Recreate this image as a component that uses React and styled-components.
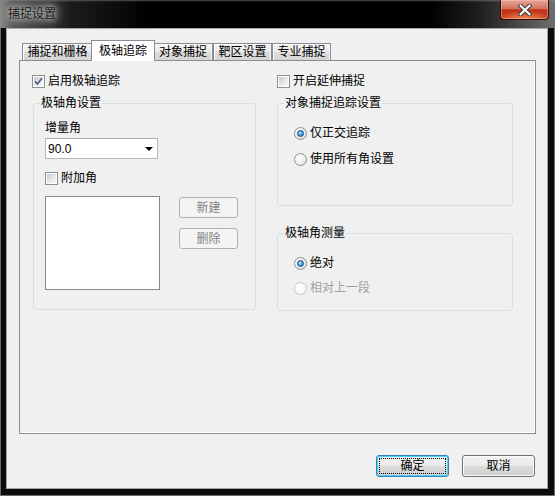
import React from "react";
import styled, { createGlobalStyle, css } from "styled-components";

const FONT = `"Liberation Sans", "Noto Sans CJK SC", sans-serif`;

const GlobalStyle = createGlobalStyle`
  html, body { margin: 0; padding: 0; width: 555px; height: 496px; overflow: hidden; background: #000; }
  #root { width: 555px; height: 496px; }
  *, *::before, *::after { box-sizing: border-box; }
`;

const Window = styled.div`
  width: 555px;
  height: 496px;
  display: flex;
  flex-direction: column;
  background: #0c0c0c;
  box-shadow: inset 0 0 0 1px #6e6e6e;
  font-family: ${FONT};
  font-size: 12px;
  color: #000;
`;

const TitleBar = styled.div`
  height: 28px;
  flex: none;
  display: flex;
  align-items: flex-start;
  background:
    linear-gradient(to bottom, rgba(140,140,140,0.55) 0, rgba(0,0,0,0) 2px),
    linear-gradient(to right, #8a8a8a 0px, #555 14px, #1c1c1c 70px, #000 150px, #000 430px, #1e1e1e 480px, #4a4a4a 520px, #6e6e6e 555px);
`;

const Title = styled.span`
  margin: 7px 0 0 8px;
  font-size: 12px;
  line-height: 14px;
  color: #1a1a1a;
  text-shadow: 0 0 4px #cfcfcf, 0 0 8px #b8b8b8, 0 0 12px #a0a0a0, 0 0 16px #909090;
`;

const CloseButton = styled.div`
  margin-left: auto;
  margin-right: 6px;
  width: 49px;
  height: 20px;
  border: 1px solid #3b0c05;
  border-top: none;
  border-radius: 0 0 4px 4px;
  background:
    radial-gradient(ellipse 60% 45% at 50% 100%, rgba(255,160,90,0.8), rgba(255,120,60,0) 100%),
    linear-gradient(to bottom, #e6a597 0%, #d5715d 45%, #bf3216 52%, #c33b1e 100%);
  box-shadow: inset 0 0 0 1px rgba(255,200,190,0.45);
  display: flex;
  align-items: center;
  justify-content: center;
`;

const FrameBody = styled.div`
  flex: 1;
  display: flex;
  padding: 0 7px 7px 6px;
`;

const Client = styled.div`
  flex: 1;
  display: flex;
  flex-direction: column;
  background: #f0f0f0;
  border: 1px solid #a6a6a6;
  padding: 11px 11px 0 12px;
`;

const TabStrip = styled.div`
  height: 20px;
  flex: none;
  display: flex;
  align-items: flex-end;
  padding-left: 3px;
`;

const Tab = styled.div`
  position: relative;
  width: ${(p) => p.$w}px;
  height: 17px;
  display: flex;
  align-items: center;
  justify-content: center;
  border: 1px solid #898c95;
  border-bottom: none;
  background: linear-gradient(to bottom, #f4f4f4 0%, #ebebeb 50%, #dddddd 51%, #d4d4d4 100%);
  box-shadow: inset 1px 1px 0 #fbfbfb, inset -1px 0 0 #f6f6f6;
  line-height: 16px;
  white-space: nowrap;
  ${(p) =>
    p.$active &&
    css`
      z-index: 1;
      height: 21px;
      margin: 0 -2px -1px;
      width: ${p.$w + 4}px;
      background: #ffffff;
      box-shadow: none;
    `}
`;

const Panel = styled.div`
  flex: 1;
  border: 1px solid #898c95;
  background: #f0f0f0;
  box-shadow: inset -1px -1px 0 #ffffff;
  padding: 13px 0 0 13px;
  display: flex;
  gap: 21px;
`;

const Column = styled.div`
  width: ${(p) => p.$w}px;
  display: flex;
  flex-direction: column;
`;

const CheckRow = styled.label`
  display: flex;
  align-items: center;
  gap: 3px;
  height: 15px;
  line-height: 15px;
  margin: ${(p) => p.$m || "0"};
  white-space: nowrap;
`;

const CheckBox = styled.span`
  width: 13px;
  height: 13px;
  flex: none;
  border: 1px solid #8e8f8f;
  padding: 1px;
  background: linear-gradient(135deg, #c5c9cf 0%, #e6e7e9 55%, #f8f8f8 100%) content-box, #ffffff;
  display: flex;
  align-items: center;
  justify-content: center;
  svg { display: block; }
`;

const Group = styled.fieldset`
  margin: ${(p) => p.$mt || 0}px 0 0 0;
  padding: 0;
  min-inline-size: 0;
  border: 1px solid #d5dfe5;
  border-radius: 3px;
`;

const Caption = styled.legend`
  margin-left: 6px;
  padding: 0 1px;
  font-size: 12px;
  line-height: 16px;
  white-space: nowrap;
`;

const GroupBody = styled.div`
  display: flex;
  flex-direction: column;
  padding: ${(p) => p.$pad};
`;

const FieldLabel = styled.div`
  height: 16px;
  line-height: 16px;
`;

const Combo = styled.div`
  margin-top: 2px;
  width: 113px;
  height: 21px;
  background: #fff;
  border: 1px solid #b5b8bd;
  border-top-color: #a9acb2;
  display: flex;
  align-items: center;
  justify-content: space-between;
  padding: 0 3px 0 2px;
  font-family: "Liberation Sans", sans-serif;
  font-size: 12px;
`;

const Arrow = styled.span`
  width: 0;
  height: 0;
  margin-right: 1px;
  border-left: 4px solid transparent;
  border-right: 4px solid transparent;
  border-top: 4px solid #000;
`;

const ListRow = styled.div`
  margin-top: 10px;
  display: flex;
  align-items: flex-start;
`;

const ListBox = styled.div`
  width: 115px;
  height: 94px;
  background: #fff;
  border: 1px solid #828790;
`;

const SideButtons = styled.div`
  margin: 1px 0 0 19px;
  display: flex;
  flex-direction: column;
  gap: 10px;
`;

const Button = styled.div`
  position: relative;
  width: ${(p) => p.$w}px;
  height: ${(p) => p.$h}px;
  display: flex;
  align-items: center;
  justify-content: center;
  border-radius: 3px;
  line-height: 14px;
  border: 1px solid #707070;
  background: linear-gradient(to bottom, #f2f2f2 0%, #ebebeb 50%, #dddddd 51%, #cfcfcf 100%);
  box-shadow: inset 0 0 0 1px #fcfcfc;
  ${(p) =>
    p.$disabled &&
    css`
      border-color: #adb2b5;
      background: #f4f4f4;
      box-shadow: none;
      color: #838383;
    `}
  ${(p) =>
    p.$default &&
    css`
      border-color: #3c7fb1;
      box-shadow: inset 0 0 0 1px #48d3fb;
      &::after {
        content: "";
        position: absolute;
        inset: 2px;
        border: 1px dotted #000;
      }
    `}
`;

const RadioRow = styled.label`
  display: flex;
  align-items: center;
  gap: 3px;
  height: 16px;
  line-height: 16px;
  white-space: nowrap;
  margin-top: ${(p) => p.$mt || 0}px;
  color: ${(p) => (p.$disabled ? "#a0a0a0" : "#000")};
`;

const RadioCircle = styled.span`
  width: 13px;
  height: 13px;
  flex: none;
  border-radius: 50%;
  border: 1px solid ${(p) => (p.$disabled ? "#c9c9c9" : "#8e8f8f")};
  background: ${(p) =>
    p.$disabled
      ? "radial-gradient(circle at 35% 35%, #ffffff 0%, #f2f2f2 100%)"
      : "radial-gradient(circle at 35% 35%, #ffffff 0%, #f1f1f1 45%, #d2d4d8 100%)"};
  display: flex;
  align-items: center;
  justify-content: center;
`;

const RadioDot = styled.span`
  width: 7px;
  height: 7px;
  border-radius: 50%;
  border: 1px solid #1c4a7e;
  background: radial-gradient(circle at 40% 40%, #c8ecff 0%, #55aee9 40%, #1760a8 100%);
`;

const ButtonRow = styled.div`
  flex: none;
  display: flex;
  justify-content: flex-end;
  gap: 13px;
  padding: 21px 1px 11px 0;
`;

function Check({ checked }) {
  return (
    <CheckBox>
      {checked && (
        <svg width="9" height="9" viewBox="0 0 9 9">
          <path d="M1.2 4.4 L3.4 7 L7.9 1.2" fill="none" stroke="#4a5d8a" strokeWidth="1.7" />
        </svg>
      )}
    </CheckBox>
  );
}

function Radio({ checked, disabled, label, mt }) {
  return (
    <RadioRow $mt={mt} $disabled={disabled}>
      <RadioCircle $disabled={disabled}>{checked && <RadioDot />}</RadioCircle>
      {label}
    </RadioRow>
  );
}

const tabs = [
  { label: "捕捉和栅格", w: 71 },
  { label: "极轴追踪", w: 60, active: true },
  { label: "对象捕捉", w: 60 },
  { label: "靶区设置", w: 59 },
  { label: "专业捕捉", w: 59 },
];

export default function App() {
  return (
    <>
      <GlobalStyle />
      <Window>
        <TitleBar>
          <Title>捕捉设置</Title>
          <CloseButton>
            <svg width="14" height="12" viewBox="0 0 14 12">
              <path d="M2.5 1.8 L11.5 10.2 M11.5 1.8 L2.5 10.2" stroke="#3a3a3a" strokeWidth="4.2" strokeLinecap="square" />
              <path d="M2.5 1.8 L11.5 10.2 M11.5 1.8 L2.5 10.2" stroke="#ffffff" strokeWidth="2.2" strokeLinecap="square" />
            </svg>
          </CloseButton>
        </TitleBar>
        <FrameBody>
          <Client>
            <TabStrip>
              {tabs.map((t) => (
                <Tab key={t.label} $w={t.w} $active={t.active}>
                  {t.label}
                </Tab>
              ))}
            </TabStrip>
            <Panel>
              <Column $w={223}>
                <CheckRow $m="0 0 0 -1px">
                  <Check checked />
                  启用极轴追踪
                </CheckRow>
                <Group $mt={6}>
                  <Caption>极轴角设置</Caption>
                  <GroupBody $pad="9px 0 19px 11px">
                    <FieldLabel>增量角</FieldLabel>
                    <Combo>
                      <span>90.0</span>
                      <Arrow />
                    </Combo>
                    <CheckRow $m="12px 0 0 0">
                      <Check />
                      附加角
                    </CheckRow>
                    <ListRow>
                      <ListBox />
                      <SideButtons>
                        <Button $w={59} $h={21} $disabled>新建</Button>
                        <Button $w={59} $h={21} $disabled>删除</Button>
                      </SideButtons>
                    </ListRow>
                  </GroupBody>
                </Group>
              </Column>
              <Column $w={236}>
                <CheckRow>
                  <Check />
                  开启延伸捕捉
                </CheckRow>
                <Group $mt={6}>
                  <Caption>对象捕捉追踪设置</Caption>
                  <GroupBody $pad="14px 0 38px 16px">
                    <Radio checked label="仅正交追踪" />
                    <Radio label="使用所有角设置" mt={10} />
                  </GroupBody>
                </Group>
                <Group $mt={19}>
                  <Caption>极轴角测量</Caption>
                  <GroupBody $pad="14px 0 14px 16px">
                    <Radio checked label="绝对" />
                    <Radio disabled label="相对上一段" mt={9} />
                  </GroupBody>
                </Group>
              </Column>
            </Panel>
            <ButtonRow>
              <Button $w={73} $h={22} $default>确定</Button>
              <Button $w={73} $h={22}>取消</Button>
            </ButtonRow>
          </Client>
        </FrameBody>
      </Window>
    </>
  );
}
